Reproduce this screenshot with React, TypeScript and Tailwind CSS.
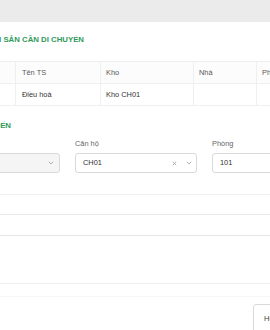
import React from "react";

const Chevron = () => (
  <svg width="6" height="4" viewBox="0 0 6 4" className="shrink-0">
    <path d="M0.8 0.8 L3 3 L5.2 0.8" fill="none" stroke="#a0a0a0" strokeWidth="0.8" />
  </svg>
);

const Clear = () => (
  <svg width="5" height="5" viewBox="0 0 5 5" className="shrink-0">
    <path d="M0.8 0.8 L4.2 4.2 M4.2 0.8 L0.8 4.2" fill="none" stroke="#a0a0a0" strokeWidth="0.8" />
  </svg>
);

export default function App() {
  const font = { fontFamily: '"Liberation Sans", Arial, sans-serif' };
  return (
    <div className="w-[270px] h-[330px] overflow-hidden bg-white" style={font}>
      <div className="h-[22px] bg-[#ebebeb]" />

      <div className="mt-[13px] h-[10px] w-[84px] flex justify-end items-center">
        <span className="whitespace-nowrap text-[7.8px] font-bold text-[#2f9a5c] leading-[10px]">
          TÀI SẢN CẦN DI CHUYỂN
        </span>
      </div>

      <div className="mt-[16px] border-t border-[#efefef] grid grid-cols-[16px_85px_93px_63px_60px] text-[7.4px] leading-[10px]">
        <div className="h-[22px] border-r border-b border-[#efefef] bg-[#fcfcfc]" />
        <div className="h-[22px] border-r border-b border-[#efefef] bg-[#fcfcfc] pl-[6px] flex items-center text-[#595959]">Tên TS</div>
        <div className="h-[22px] border-r border-b border-[#efefef] bg-[#fcfcfc] pl-[5px] flex items-center text-[#595959]">Kho</div>
        <div className="h-[22px] border-r border-b border-[#efefef] bg-[#fcfcfc] pl-[5px] flex items-center text-[#595959]">Nhà</div>
        <div className="h-[22px] border-b border-[#efefef] bg-[#fcfcfc] pl-[5px] flex items-center text-[#595959] whitespace-nowrap">Phòng</div>
        <div className="h-[22px] border-r border-b border-[#efefef]" />
        <div className="h-[22px] border-r border-b border-[#efefef] pl-[6px] flex items-center text-[#333]">Điều hoà</div>
        <div className="h-[22px] border-r border-b border-[#efefef] pl-[5px] flex items-center text-[#333]">Kho CH01</div>
        <div className="h-[22px] border-r border-b border-[#efefef]" />
        <div className="h-[22px] border-b border-[#efefef]" />
      </div>

      <div className="mt-[15px] h-[10px] w-[11px] flex justify-end items-center">
        <span className="whitespace-nowrap text-[7.8px] font-bold text-[#2f9a5c] leading-[10px]">
          VỊ TRÍ CHUYỂN ĐẾN
        </span>
      </div>

      <div className="mt-[8px] ml-[-62px] flex gap-[15px] text-[7.4px] leading-[10px]">
        <div className="w-[122px] shrink-0 flex flex-col">
          <div className="h-[10px] text-[#666]">Nhà</div>
          <div className="mt-[4px] h-[20px] rounded-[3px] border border-[#d9d9d9] bg-[#f5f5f5] flex items-center justify-end pr-[5px]">
            <Chevron />
          </div>
        </div>
        <div className="w-[122px] shrink-0 flex flex-col">
          <div className="h-[10px] text-[#666]">Căn hộ</div>
          <div className="mt-[4px] h-[20px] rounded-[3px] border border-[#d9d9d9] bg-white flex items-center pl-[7px] pr-[4px] text-[#333]">
            <span className="flex-1">CH01</span>
            <Clear />
            <span className="w-[9px]" />
            <Chevron />
          </div>
        </div>
        <div className="w-[122px] shrink-0 flex flex-col">
          <div className="h-[10px] text-[#666]">Phòng</div>
          <div className="mt-[4px] h-[20px] rounded-[3px] border border-[#d9d9d9] bg-white flex items-center pl-[7px] text-[#333]">
            101
          </div>
        </div>
      </div>

      <div className="mt-[21px] h-[20px] border-t border-[#efefef]" />
      <div className="h-[21px] border-t border-[#e9e9e9]" />
      <div className="h-[48px] border-t border-[#e5e5e5]" />
      <div className="h-[13px] border-t border-[#efefef]" />
      <div className="border-t border-[#f7f7f7] pt-[7px] flex pl-[253px]">
        <div className="shrink-0 w-[44px] h-[29px] rounded-[3px] border border-[#d9d9d9] bg-white flex items-center pl-[10px] text-[7.5px] text-[#444]">
          Huỷ
        </div>
      </div>
    </div>
  );
}
